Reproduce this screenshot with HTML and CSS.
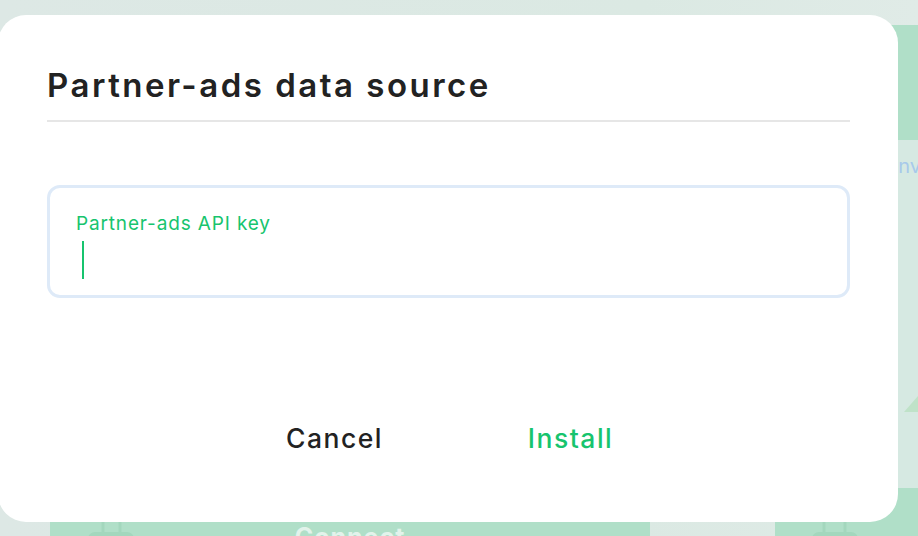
FILE: index.html
```html
<!DOCTYPE html>
<html lang="en">
<head>
<meta charset="utf-8">
<title>Partner-ads data source</title>
<link rel="stylesheet" href="styles.css">
</head>
<body>
<div class="backdrop">
  <div class="bd-card bd-right-top"></div>
  <div class="bd-right-mid">
    <span class="bd-link">Conv</span>
    <span class="bd-tri"></span>
  </div>
  <div class="bd-card bd-bottom-left">
    <svg class="plug" width="46" height="14" viewBox="0 0 46 14"><path d="M15 0v10M32 0v10" stroke="#a3d7bd" stroke-width="3"/><rect x="0" y="10" width="46" height="14" rx="7" fill="#a3d7bd"/></svg>
    <span class="bd-connect">Connect</span>
  </div>
  <div class="bd-card bd-bottom-right">
    <svg class="plug" width="46" height="14" viewBox="0 0 46 14"><path d="M12 0v10M33 0v10" stroke="#a3d7bd" stroke-width="3"/><rect x="0" y="10" width="46" height="14" rx="7" fill="#a3d7bd"/></svg>
  </div>
</div>

<div class="dialog" role="dialog" aria-labelledby="dlg-title">
  <h1 class="dialog-title" id="dlg-title">Partner-ads data source</h1>
  <div class="field">
    <label class="field-label" for="api-key">Partner-ads API key</label>
    <div class="field-input"><span class="caret"></span></div>
  </div>
  <div class="actions">
    <button class="btn btn-cancel" type="button">Cancel</button>
    <button class="btn btn-install" type="button">Install</button>
  </div>
</div>
</body>
</html>
```

FILE: styles.css
```css
html, body {
  margin: 0;
  padding: 0;
}
body {
  width: 918px;
  height: 536px;
  overflow: hidden;
  position: relative;
  background: #dce9e4;
  font-family: "Inter", "Liberation Sans", sans-serif;
}

/* faded page behind the modal */
.backdrop {
  display: grid;
  grid-template-columns: 50px 600px 125px 1fr;
  grid-template-rows: 25px 115px 348px 1fr;
  width: 918px;
  height: 536px;
  background: linear-gradient(90deg, #dde8e5 0%, #dbe9e3 70%, #e0ebe7 100%);
}
.bd-card {
  background: #b0dfc8;
}
.bd-right-top {
  grid-column: 4;
  grid-row: 2;
}
.bd-right-mid {
  grid-column: 4;
  grid-row: 3;
  background: #d6e9e2;
  display: flex;
  flex-direction: column;
  align-items: flex-end;
  padding-top: 14px;
}
.bd-link {
  font-size: 20px;
  color: #a7c9ea;
  line-height: 24px;
  margin-right: -3px;
}
.bd-tri {
  margin-top: 218px;
  width: 0;
  height: 0;
  border-left: 14px solid transparent;
  border-bottom: 16px solid #bfe2c8;
}
.bd-bottom-left {
  grid-column: 2;
  grid-row: 4;
  display: flex;
  flex-direction: column;
  position: relative;
}
.bd-bottom-left .plug {
  margin: 34px 0 0 38px;
}
.bd-connect {
  position: absolute;
  left: 0;
  right: 0;
  top: 34px;
  text-align: center;
  color: #e2f3eb;
  font-weight: 700;
  font-size: 25px;
  line-height: 30px;
  letter-spacing: 1px;
}
.bd-bottom-right {
  grid-column: 4;
  grid-row: 4;
  display: flex;
  flex-direction: column;
}
.bd-bottom-right .plug {
  margin: 34px 0 0 37px;
}

/* modal */
.dialog {
  position: absolute;
  left: -2px;
  top: 15px;
  width: 900px;
  height: 507px;
  box-sizing: border-box;
  background: #ffffff;
  border-radius: 28px;
  padding: 50px 48px 0 49px;
  display: flex;
  flex-direction: column;
}
.dialog-title {
  margin: 0;
  font-size: 33px;
  line-height: 40px;
  font-weight: 600;
  color: #222222;
  letter-spacing: 2.5px;
  padding-bottom: 15px;
  border-bottom: 2px solid #e6e6e6;
}
.field {
  margin-top: 63px;
  border: 3px solid #deeaf8;
  border-radius: 13px;
  padding: 24px 26px 16px 26px;
  display: flex;
  flex-direction: column;
}
.field-label {
  font-size: 19px;
  line-height: 24px;
  color: #17c46e;
  letter-spacing: 0.85px;
}
.field-input {
  margin-top: 5px;
  height: 38px;
  padding-left: 6px;
}
.caret {
  display: block;
  width: 2px;
  height: 38px;
  background: #17c46e;
}
.actions {
  margin-top: 124px;
  display: flex;
  justify-content: center;
  gap: 36px;
  padding-left: 8px;
}
.btn {
  width: 200px;
  background: none;
  border: 0;
  padding: 0;
  font-family: inherit;
  font-size: 26.5px;
  line-height: 32px;
  font-weight: 500;
  letter-spacing: 1.5px;
  cursor: pointer;
}
.btn-cancel {
  color: #222222;
}
.btn-install {
  color: #17c46e;
}
```
